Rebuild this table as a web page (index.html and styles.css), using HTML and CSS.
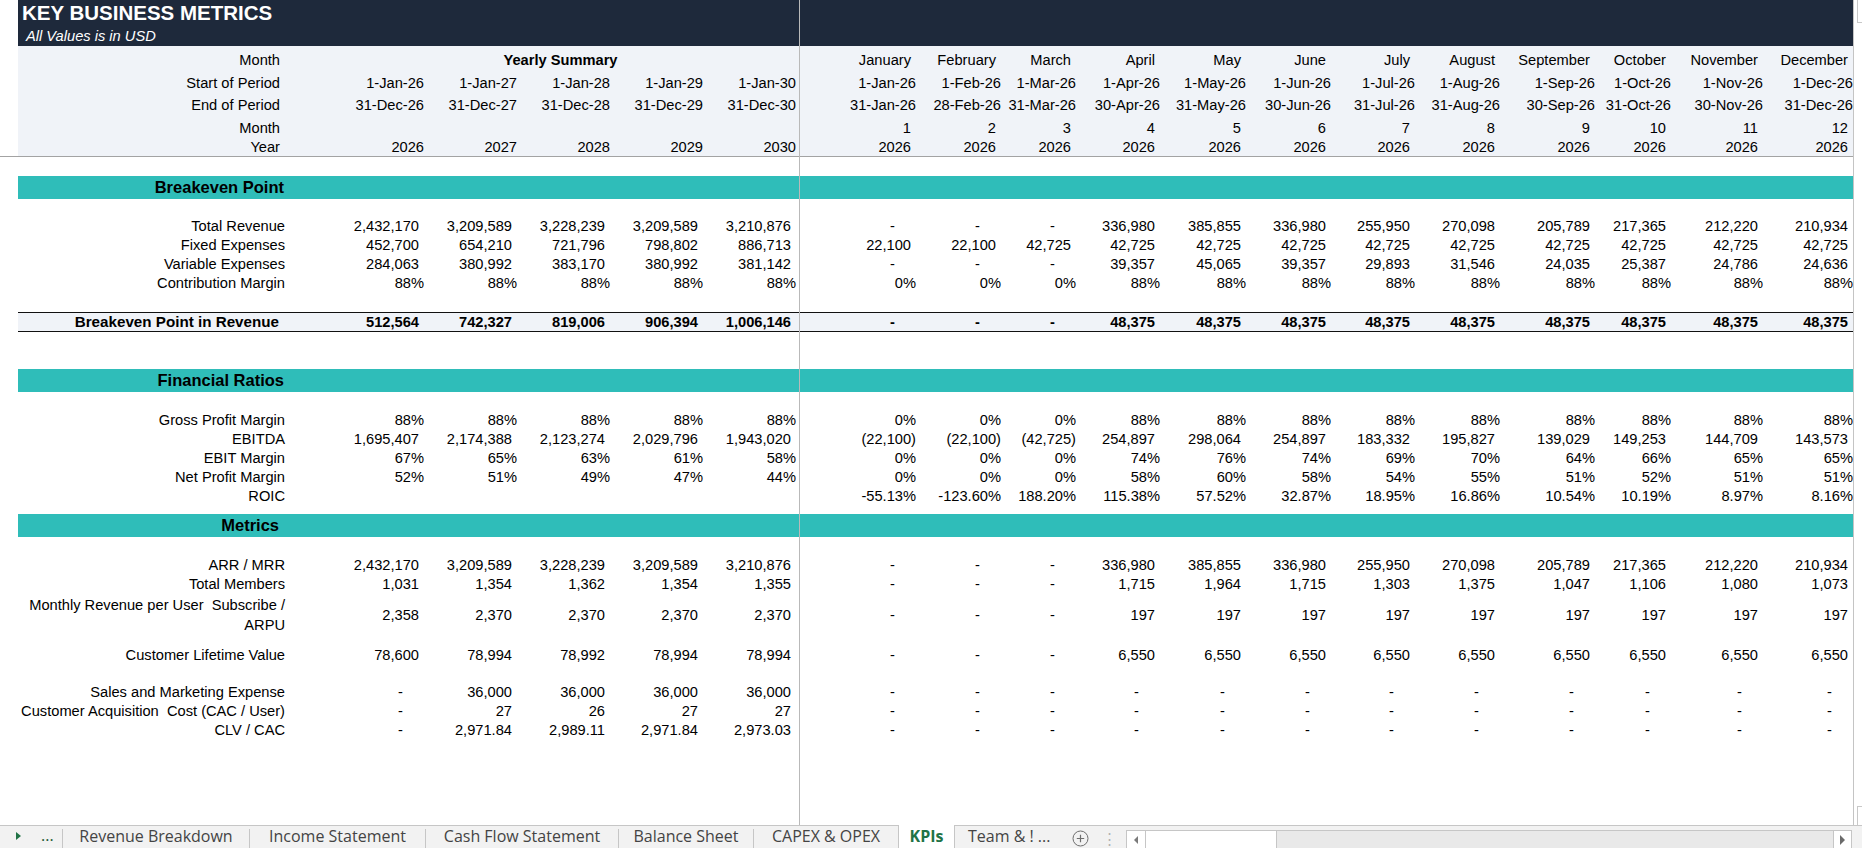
FILE: index.html
```html
<!DOCTYPE html>
<html lang="en">
<head>
<meta charset="utf-8">
<title>KPIs</title>
<link rel="stylesheet" href="styles.css">
</head>
<body>
<div class="app">
  <div class="workspace">
    <div class="pane pane-left">
      <div class="head">
        <div class="titlebar tb-left">
          <div class="title">KEY BUSINESS METRICS</div>
          <div class="subtitle">All Values is in USD</div>
        </div>
        <div class="hband hb-left">
          <div class="lg h1"><div class="hlab">Month</div><div class="ys">Yearly Summary</div></div>
          <div class="lg h2"><div class="hlab">Start of Period</div><div class="z">1-Jan-26</div><div class="z">1-Jan-27</div><div class="z">1-Jan-28</div><div class="z">1-Jan-29</div><div class="z">1-Jan-30</div></div>
          <div class="lg h3"><div class="hlab">End of Period</div><div class="z">31-Dec-26</div><div class="z">31-Dec-27</div><div class="z">31-Dec-28</div><div class="z">31-Dec-29</div><div class="z">31-Dec-30</div></div>
          <div class="lg h4"><div class="hlab">Month</div></div>
          <div class="lg h5"><div class="hlab">Year</div><div class="z">2026</div><div class="z">2027</div><div class="z">2028</div><div class="z">2029</div><div class="z">2030</div></div>
        </div>
      </div>
      <div class="body body-left">
        <div class="sp19"></div>
        <div class="lg band"><div class="blab">Breakeven Point</div></div>
        <div class="sp18"></div>
        <div class="lg r"><div class="lab">Total Revenue</div><div class="n">2,432,170</div><div class="n">3,209,589</div><div class="n">3,228,239</div><div class="n">3,209,589</div><div class="n">3,210,876</div></div>
        <div class="lg r"><div class="lab">Fixed Expenses</div><div class="n">452,700</div><div class="n">654,210</div><div class="n">721,796</div><div class="n">798,802</div><div class="n">886,713</div></div>
        <div class="lg r"><div class="lab">Variable Expenses</div><div class="n">284,063</div><div class="n">380,992</div><div class="n">383,170</div><div class="n">380,992</div><div class="n">381,142</div></div>
        <div class="lg r"><div class="lab">Contribution Margin</div><div class="z">88%</div><div class="z">88%</div><div class="z">88%</div><div class="z">88%</div><div class="z">88%</div></div>
        <div class="sp19"></div>
        <div class="lg tot"><div class="tlab">Breakeven Point in Revenue</div><div class="n">512,564</div><div class="n">742,327</div><div class="n">819,006</div><div class="n">906,394</div><div class="n">1,006,146</div></div>
        <div class="sp37"></div>
        <div class="lg band"><div class="blab">Financial Ratios</div></div>
        <div class="sp19"></div>
        <div class="lg r"><div class="lab">Gross Profit Margin</div><div class="z">88%</div><div class="z">88%</div><div class="z">88%</div><div class="z">88%</div><div class="z">88%</div></div>
        <div class="lg r"><div class="lab">EBITDA</div><div class="n">1,695,407</div><div class="n">2,174,388</div><div class="n">2,123,274</div><div class="n">2,029,796</div><div class="n">1,943,020</div></div>
        <div class="lg r"><div class="lab">EBIT Margin</div><div class="z">67%</div><div class="z">65%</div><div class="z">63%</div><div class="z">61%</div><div class="z">58%</div></div>
        <div class="lg r"><div class="lab">Net Profit Margin</div><div class="z">52%</div><div class="z">51%</div><div class="z">49%</div><div class="z">47%</div><div class="z">44%</div></div>
        <div class="lg r"><div class="lab">ROIC</div></div>
        <div class="sp8"></div>
        <div class="lg band"><div class="blab mlab">Metrics</div></div>
        <div class="sp19"></div>
        <div class="lg r"><div class="lab">ARR / MRR</div><div class="n">2,432,170</div><div class="n">3,209,589</div><div class="n">3,228,239</div><div class="n">3,209,589</div><div class="n">3,210,876</div></div>
        <div class="lg r"><div class="lab">Total Members</div><div class="n">1,031</div><div class="n">1,354</div><div class="n">1,362</div><div class="n">1,354</div><div class="n">1,355</div></div>
        <div class="lg tall"><div class="lab"><span class="wrap">Monthly Revenue per User&nbsp; Subscribe /<br>ARPU</span></div><div class="n">2,358</div><div class="n">2,370</div><div class="n">2,370</div><div class="n">2,370</div><div class="n">2,370</div></div>
        <div class="sp10"></div>
        <div class="lg r"><div class="lab">Customer Lifetime Value</div><div class="n">78,600</div><div class="n">78,994</div><div class="n">78,992</div><div class="n">78,994</div><div class="n">78,994</div></div>
        <div class="sp18"></div>
        <div class="lg r"><div class="lab">Sales and Marketing Expense</div><div class="d">-</div><div class="n">36,000</div><div class="n">36,000</div><div class="n">36,000</div><div class="n">36,000</div></div>
        <div class="lg r"><div class="lab">Customer Acquisition&nbsp; Cost (CAC / User)</div><div class="d">-</div><div class="n">27</div><div class="n">26</div><div class="n">27</div><div class="n">27</div></div>
        <div class="lg r"><div class="lab">CLV / CAC</div><div class="d">-</div><div class="n">2,971.84</div><div class="n">2,989.11</div><div class="n">2,971.84</div><div class="n">2,973.03</div></div>
      </div>
    </div>

    <div class="pane pane-right">
      <div class="head">
        <div class="titlebar"></div>
        <div class="hband">
          <div class="rg h1"><div class="n">January</div><div class="n">February</div><div class="n">March</div><div class="n">April</div><div class="n">May</div><div class="n">June</div><div class="n">July</div><div class="n">August</div><div class="n">September</div><div class="n">October</div><div class="n">November</div><div class="n">December</div></div>
          <div class="rg h2"><div class="z">1-Jan-26</div><div class="z">1-Feb-26</div><div class="z">1-Mar-26</div><div class="z">1-Apr-26</div><div class="z">1-May-26</div><div class="z">1-Jun-26</div><div class="z">1-Jul-26</div><div class="z">1-Aug-26</div><div class="z">1-Sep-26</div><div class="z">1-Oct-26</div><div class="z">1-Nov-26</div><div class="z">1-Dec-26</div></div>
          <div class="rg h3"><div class="z">31-Jan-26</div><div class="z">28-Feb-26</div><div class="z">31-Mar-26</div><div class="z">30-Apr-26</div><div class="z">31-May-26</div><div class="z">30-Jun-26</div><div class="z">31-Jul-26</div><div class="z">31-Aug-26</div><div class="z">30-Sep-26</div><div class="z">31-Oct-26</div><div class="z">30-Nov-26</div><div class="z">31-Dec-26</div></div>
          <div class="rg h4"><div class="n">1</div><div class="n">2</div><div class="n">3</div><div class="n">4</div><div class="n">5</div><div class="n">6</div><div class="n">7</div><div class="n">8</div><div class="n">9</div><div class="n">10</div><div class="n">11</div><div class="n">12</div></div>
          <div class="rg h5"><div class="n">2026</div><div class="n">2026</div><div class="n">2026</div><div class="n">2026</div><div class="n">2026</div><div class="n">2026</div><div class="n">2026</div><div class="n">2026</div><div class="n">2026</div><div class="n">2026</div><div class="n">2026</div><div class="n">2026</div></div>
        </div>
      </div>
      <div class="body">
        <div class="sp19"></div>
        <div class="rg band"></div>
        <div class="sp18"></div>
        <div class="rg r"><div class="d">-</div><div class="d">-</div><div class="d">-</div><div class="n">336,980</div><div class="n">385,855</div><div class="n">336,980</div><div class="n">255,950</div><div class="n">270,098</div><div class="n">205,789</div><div class="n">217,365</div><div class="n">212,220</div><div class="n">210,934</div></div>
        <div class="rg r"><div class="n">22,100</div><div class="n">22,100</div><div class="n">42,725</div><div class="n">42,725</div><div class="n">42,725</div><div class="n">42,725</div><div class="n">42,725</div><div class="n">42,725</div><div class="n">42,725</div><div class="n">42,725</div><div class="n">42,725</div><div class="n">42,725</div></div>
        <div class="rg r"><div class="d">-</div><div class="d">-</div><div class="d">-</div><div class="n">39,357</div><div class="n">45,065</div><div class="n">39,357</div><div class="n">29,893</div><div class="n">31,546</div><div class="n">24,035</div><div class="n">25,387</div><div class="n">24,786</div><div class="n">24,636</div></div>
        <div class="rg r"><div class="z">0%</div><div class="z">0%</div><div class="z">0%</div><div class="z">88%</div><div class="z">88%</div><div class="z">88%</div><div class="z">88%</div><div class="z">88%</div><div class="z">88%</div><div class="z">88%</div><div class="z">88%</div><div class="z">88%</div></div>
        <div class="sp19"></div>
        <div class="rg tot"><div class="d">-</div><div class="d">-</div><div class="d">-</div><div class="n">48,375</div><div class="n">48,375</div><div class="n">48,375</div><div class="n">48,375</div><div class="n">48,375</div><div class="n">48,375</div><div class="n">48,375</div><div class="n">48,375</div><div class="n">48,375</div></div>
        <div class="sp37"></div>
        <div class="rg band"></div>
        <div class="sp19"></div>
        <div class="rg r"><div class="z">0%</div><div class="z">0%</div><div class="z">0%</div><div class="z">88%</div><div class="z">88%</div><div class="z">88%</div><div class="z">88%</div><div class="z">88%</div><div class="z">88%</div><div class="z">88%</div><div class="z">88%</div><div class="z">88%</div></div>
        <div class="rg r"><div class="z">(22,100)</div><div class="z">(22,100)</div><div class="z">(42,725)</div><div class="n">254,897</div><div class="n">298,064</div><div class="n">254,897</div><div class="n">183,332</div><div class="n">195,827</div><div class="n">139,029</div><div class="n">149,253</div><div class="n">144,709</div><div class="n">143,573</div></div>
        <div class="rg r"><div class="z">0%</div><div class="z">0%</div><div class="z">0%</div><div class="z">74%</div><div class="z">76%</div><div class="z">74%</div><div class="z">69%</div><div class="z">70%</div><div class="z">64%</div><div class="z">66%</div><div class="z">65%</div><div class="z">65%</div></div>
        <div class="rg r"><div class="z">0%</div><div class="z">0%</div><div class="z">0%</div><div class="z">58%</div><div class="z">60%</div><div class="z">58%</div><div class="z">54%</div><div class="z">55%</div><div class="z">51%</div><div class="z">52%</div><div class="z">51%</div><div class="z">51%</div></div>
        <div class="rg r"><div class="z">-55.13%</div><div class="z">-123.60%</div><div class="z">188.20%</div><div class="z">115.38%</div><div class="z">57.52%</div><div class="z">32.87%</div><div class="z">18.95%</div><div class="z">16.86%</div><div class="z">10.54%</div><div class="z">10.19%</div><div class="z">8.97%</div><div class="z">8.16%</div></div>
        <div class="sp8"></div>
        <div class="rg band"></div>
        <div class="sp19"></div>
        <div class="rg r"><div class="d">-</div><div class="d">-</div><div class="d">-</div><div class="n">336,980</div><div class="n">385,855</div><div class="n">336,980</div><div class="n">255,950</div><div class="n">270,098</div><div class="n">205,789</div><div class="n">217,365</div><div class="n">212,220</div><div class="n">210,934</div></div>
        <div class="rg r"><div class="d">-</div><div class="d">-</div><div class="d">-</div><div class="n">1,715</div><div class="n">1,964</div><div class="n">1,715</div><div class="n">1,303</div><div class="n">1,375</div><div class="n">1,047</div><div class="n">1,106</div><div class="n">1,080</div><div class="n">1,073</div></div>
        <div class="rg tall"><div class="d">-</div><div class="d">-</div><div class="d">-</div><div class="n">197</div><div class="n">197</div><div class="n">197</div><div class="n">197</div><div class="n">197</div><div class="n">197</div><div class="n">197</div><div class="n">197</div><div class="n">197</div></div>
        <div class="sp10"></div>
        <div class="rg r"><div class="d">-</div><div class="d">-</div><div class="d">-</div><div class="n">6,550</div><div class="n">6,550</div><div class="n">6,550</div><div class="n">6,550</div><div class="n">6,550</div><div class="n">6,550</div><div class="n">6,550</div><div class="n">6,550</div><div class="n">6,550</div></div>
        <div class="sp18"></div>
        <div class="rg r"><div class="d">-</div><div class="d">-</div><div class="d">-</div><div class="d">-</div><div class="d">-</div><div class="d">-</div><div class="d">-</div><div class="d">-</div><div class="d">-</div><div class="d">-</div><div class="d">-</div><div class="d">-</div></div>
        <div class="rg r"><div class="d">-</div><div class="d">-</div><div class="d">-</div><div class="d">-</div><div class="d">-</div><div class="d">-</div><div class="d">-</div><div class="d">-</div><div class="d">-</div><div class="d">-</div><div class="d">-</div><div class="d">-</div></div>
        <div class="rg r"><div class="d">-</div><div class="d">-</div><div class="d">-</div><div class="d">-</div><div class="d">-</div><div class="d">-</div><div class="d">-</div><div class="d">-</div><div class="d">-</div><div class="d">-</div><div class="d">-</div><div class="d">-</div></div>
      </div>
    </div>

    <div class="vscroll">
      <div class="vbtn vbtn-top"></div>
      <div class="vbtn vbtn-bottom"></div>
    </div>
  </div>

  <div class="tabbar">
    <div class="tabnav"><span class="tri"></span><span class="more">...</span></div>
    <div class="tab w-rev">Revenue Breakdown</div>
    <div class="tab w-inc">Income Statement</div>
    <div class="tab w-cash">Cash Flow Statement</div>
    <div class="tab w-bal">Balance Sheet</div>
    <div class="tab w-capex">CAPEX &amp; OPEX</div>
    <div class="tab active">KPIs</div>
    <div class="tab team">Team &amp; ! ...</div>
    <div class="addsheet">
      <svg width="17" height="17" viewBox="0 0 17 17"><circle cx="8.5" cy="8.5" r="7.5" fill="none" stroke="#6e6e6e" stroke-width="1"/><path d="M8.5 4.8v7.4M4.8 8.5h7.4" stroke="#6e6e6e" stroke-width="1.2" fill="none"/></svg>
    </div>
    <div class="vdots">&#8942;</div>
    <div class="hscroll">
      <div class="hbtn hbtn-left"><span class="larr"></span></div>
      <div class="thumb"></div>
      <div class="track"></div>
      <div class="hbtn hbtn-right"><span class="rarr"></span></div>
    </div>
  </div>
</div>
</body>
</html>
```

FILE: styles.css
```css
* { box-sizing: border-box; }
html, body { margin: 0; padding: 0; }
body {
  width: 1862px;
  height: 848px;
  overflow: hidden;
  background: #fff;
  color: #000;
  font-family: "Liberation Sans", Arial, sans-serif;
  font-size: 14.67px;
}
.app { display: flex; flex-direction: column; width: 1862px; height: 848px; }
.workspace { display: flex; height: 825px; }

.pane-left { width: 800px; border-right: 1px solid #b9b9b9; }
.pane-right { width: 1053px; }

.head { border-bottom: 1px solid #a3a3a3; }
.pane-left .head .titlebar,
.pane-left .head .hband { margin-left: 18px; }

.titlebar { height: 46px; background: #1e293b; color: #fff; }
.title { height: 26px; line-height: 26px; padding-left: 4px; font-size: 20.5px; font-weight: bold; white-space: nowrap; }
.subtitle { height: 20px; line-height: 20px; padding-left: 8px; font-style: italic; white-space: nowrap; }

.hband { background: #f0f3f8; padding: 3px 0 1px; }
.h1 { height: 23px; line-height: 23px; }
.h2 { height: 22px; line-height: 22px; }
.h3 { height: 23px; line-height: 23px; }
.h4 { height: 22px; line-height: 22px; }
.h5 { height: 16px; line-height: 16px; }

.lg { display: grid; grid-template-columns: 313px repeat(5, 93px); }
.rg { display: grid; grid-template-columns: 116px 85px 75px 84px 86px 85px 84px 85px 95px 76px 92px 90px; }

.body-left { padding-left: 18px; }

.hlab, .lab, .blab, .tlab {
  display: flex;
  justify-content: flex-end;
  white-space: nowrap;
}
.hlab { padding-right: 51px; }
.lab { padding-right: 46px; }
.blab { padding-right: 47px; }
.mlab { padding-right: 52px; }
.tlab { padding-right: 52px; font-size: 15.2px; }

.ys { grid-column: 2 / span 5; text-align: center; font-weight: bold; padding-right: 6px; }

.n, .z, .d { text-align: right; white-space: nowrap; }
.n { padding-right: 5px; }
.z { padding-right: 0; }
.d { padding-right: 21px; }

.r { height: 19px; line-height: 19px; }
.band { height: 23px; line-height: 23px; background: #2fbdb9; font-weight: bold; font-size: 16.5px; }
.tot {
  height: 20px;
  line-height: 18px;
  border-top: 1px solid #111;
  border-bottom: 1px solid #111;
  background: #f0f3f8;
  font-weight: bold;
}
.tall { height: 42px; line-height: 20px; }
.tall > div { display: flex; align-items: center; justify-content: flex-end; }
.wrap { text-align: right; }

.sp8 { height: 8px; }
.sp10 { height: 10px; }
.sp18 { height: 18px; }
.sp19 { height: 19px; }
.sp37 { height: 37px; }

.vscroll {
  width: 9px;
  border-left: 1px solid #c4c4c4;
  padding-left: 3px;
  display: flex;
  flex-direction: column;
  justify-content: space-between;
  background: #fff;
}
.vbtn { height: 23px; border-left: 1px solid #c8c8c8; background: #fff; }
.vbtn-top { border-bottom: 1px solid #c8c8c8; }
.vbtn-bottom { height: 19px; border-top: 1px solid #c8c8c8; }

.tabbar {
  height: 23px;
  border-top: 1px solid #c6c6c6;
  background: #f2f2f2;
  display: flex;
  font-family: "Open Sans", "Noto Sans", sans-serif;
  font-size: 16px;
  color: #444;
}
.tabnav { width: 62px; display: flex; align-items: center; padding-left: 16px; }
.tri {
  width: 0; height: 0;
  border-top: 4px solid transparent;
  border-bottom: 4px solid transparent;
  border-left: 5px solid #217346;
  margin-top: -2px;
}
.more { margin-left: 20px; color: #1f5a36; line-height: 15px; margin-top: -4px; }
.tab {
  margin-top: 3px;
  height: 19px;
  line-height: 15px;
  border-left: 1px solid #c6c6c6;
  text-align: center;
  white-space: nowrap;
}
.w-rev { width: 187px; }
.w-inc { width: 176px; }
.w-cash { width: 193px; }
.w-bal { width: 135px; }
.w-capex { width: 145px; }
.tab.active {
  width: 57px;
  margin-top: -1px;
  height: 23px;
  padding-top: 4px;
  background: #fff;
  border-right: 1px solid #c6c6c6;
  color: #217346;
  font-weight: bold;
}
.tab.team { width: 107px; border-left: none; text-align: left; padding-left: 13px; }
.addsheet { width: 36px; display: flex; align-items: center; justify-content: center; padding-top: 3px; }
.addsheet svg { display: block; }
.vdots { width: 22px; text-align: center; color: #b3b3b3; line-height: 20px; padding-top: 2px; font-size: 15px; }
.hscroll {
  margin-left: 6px;
  margin-top: 4px;
  width: 726px;
  height: 18px;
  display: flex;
  border-top: 1px solid #c6c6c6;
  border-left: 1px solid #c6c6c6;
  border-right: 1px solid #c6c6c6;
}
.hbtn { background: #fff; display: flex; align-items: center; justify-content: center; }
.hbtn-left { width: 18px; }
.hbtn-right { width: 18px; border-left: 1px solid #c6c6c6; }
.thumb { width: 132px; background: #fff; border-left: 1px solid #c6c6c6; border-right: 1px solid #c6c6c6; }
.track { flex: 1; background: #e9e9e9; }
.larr {
  width: 0; height: 0;
  border-top: 4px solid transparent;
  border-bottom: 4px solid transparent;
  border-right: 4px solid #7a7a7a;
}
.rarr {
  width: 0; height: 0;
  border-top: 5px solid transparent;
  border-bottom: 5px solid transparent;
  border-left: 5px solid #6a6a6a;
}
```
